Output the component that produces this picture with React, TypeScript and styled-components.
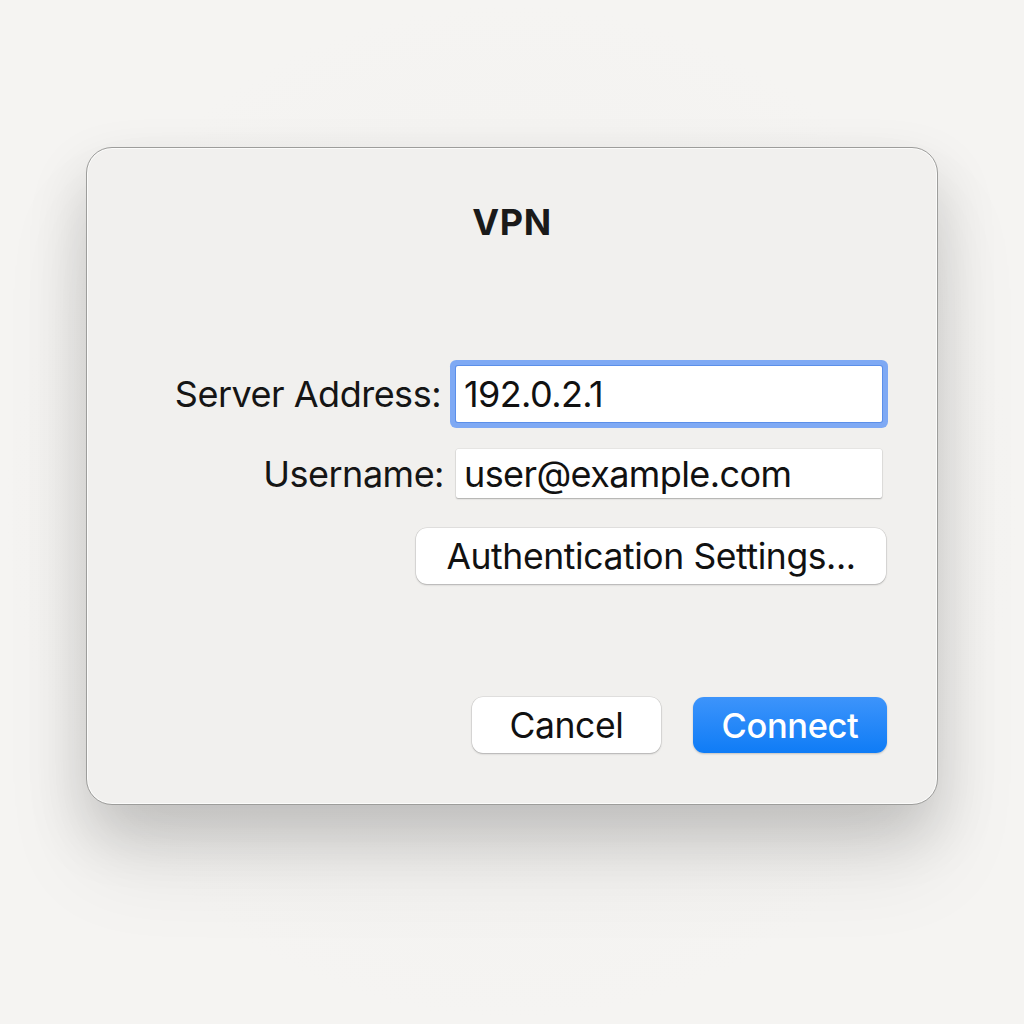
import React from "react";
import styled, { createGlobalStyle } from "styled-components";

const Global = createGlobalStyle`
  html, body { margin: 0; padding: 0; background: #f4f3f1; }
  body { font-family: Inter, "Noto Sans", "Liberation Sans", sans-serif; color: #111; }
  * { box-sizing: border-box; }
`;

const Page = styled.div`
  width: 1024px;
  height: 1024px;
  padding: 147px 0 0 86px;
  background: radial-gradient(ellipse at 50% 50%, #f1f0ee 0%, #f5f4f2 70%);
`;

const Dialog = styled.div`
  width: 852px;
  height: 658px;
  background: #f1f0ee;
  border: 1.5px solid #9d9d9b;
  border-radius: 26px;
  box-shadow: inset 0 0 0 1px #fbfbfa, 0 28px 60px rgba(0, 0, 0, 0.16), 0 60px 90px rgba(0, 0, 0, 0.08);
  display: flex;
  flex-direction: column;
  padding: 55px 50px 51px 50px;
`;

const Title = styled.h1`
  margin: 0;
  text-align: center;
  font-size: 36px;
  line-height: 38px;
  font-weight: 700;
  color: #1a1a1a;
  letter-spacing: 0.6px;
`;

const Form = styled.div`
  margin-top: 125px;
  align-self: flex-end;
  margin-right: 5px;
  display: grid;
  grid-template-columns: auto 426px;
  column-gap: 15px;
  row-gap: 27px;
  align-items: center;
`;

const Label = styled.label<{ $shift?: number }>`
  text-align: right;
  font-size: 36px;
  color: #151515;
  letter-spacing: -0.5px;
  margin-right: ${(p) => p.$shift ?? 0}px;
`;

const Field = styled.div<{ $focused?: boolean; $h: number }>`
  height: ${(p) => p.$h}px;
  background: #ffffff;
  display: flex;
  align-items: center;
  padding-left: 8px;
  font-size: 36px;
  letter-spacing: -0.6px;
  color: #111;
  border-radius: 2px;
  box-shadow: ${(p) =>
    p.$focused
      ? "0 0 0 1px #5b8fe9, 0 0 0 6px #7ea9f4"
      : "0 1px 1.5px rgba(0,0,0,0.25), 0 0 0 0.5px rgba(0,0,0,0.08)"};
`;

const AuthRow = styled.div`
  margin-top: 30px;
  align-self: flex-end;
  margin-right: 1px;
`;

const Button = styled.button<{ $primary?: boolean; $w: number }>`
  width: ${(p) => p.$w}px;
  height: 56px;
  border-radius: 11px;
  border: none;
  font-family: inherit;
  font-size: ${(p) => (p.$primary ? 34.5 : 35.5)}px;
  letter-spacing: -0.4px;
  cursor: pointer;
  padding: 0;
  color: ${(p) => (p.$primary ? "#ffffff" : "#111111")};
  font-weight: ${(p) => (p.$primary ? 500 : 400)};
  background: ${(p) =>
    p.$primary ? "linear-gradient(180deg, #3d94fb 0%, #0f7cf6 100%)" : "#ffffff"};
  box-shadow: ${(p) =>
    p.$primary
      ? "0 1px 2px rgba(0,0,0,0.2)"
      : "0 1px 2px rgba(0,0,0,0.22), 0 0 0 0.5px rgba(0,0,0,0.12)"};
`;

const Footer = styled.div`
  margin-top: auto;
  display: flex;
  justify-content: flex-end;
  gap: 32px;
`;

export default function App() {
  return (
    <>
      <Global />
      <Page>
        <Dialog>
          <Title>VPN</Title>
          <Form>
            <Label>Server Address:</Label>
            <Field $focused $h={56}>192.0.2.1</Field>
            <Label $shift={-3}>Username:</Label>
            <Field $h={49}>user@example.com</Field>
          </Form>
          <AuthRow>
            <Button $w={470}>Authentication Settings...</Button>
          </AuthRow>
          <Footer>
            <Button $w={189}>Cancel</Button>
            <Button $primary $w={194}>Connect</Button>
          </Footer>
        </Dialog>
      </Page>
    </>
  );
}
